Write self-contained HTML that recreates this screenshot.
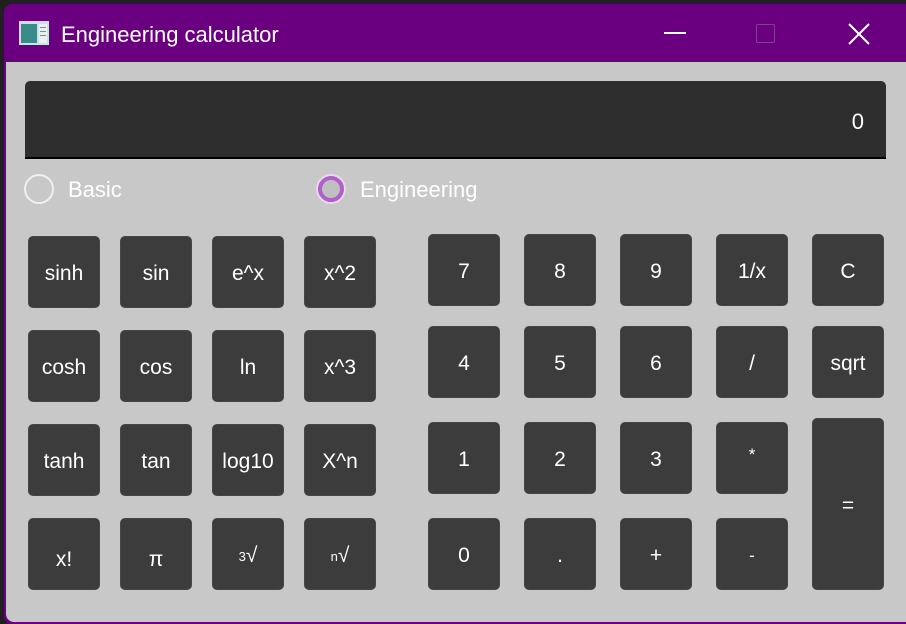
<!DOCTYPE html>
<html><head><meta charset="utf-8"><style>
*{margin:0;padding:0;box-sizing:border-box}
body{width:906px;height:611px;background:#202020;overflow:hidden;position:relative;font-family:"Segoe UI","Liberation Sans",sans-serif;color:#fff}
.win{position:absolute;left:4px;top:4px;width:910px;height:620px;background:#6a0080;border-radius:8px;overflow:hidden}
.title{position:absolute;left:0;top:0;right:0;height:58px}
.body{position:absolute;left:2px;top:58px;width:910px;height:560px;background:#c8c8c8;border-radius:0 0 0 8px}
.t{position:absolute;left:57px;top:18px;font-size:22px}
.b{position:absolute;width:72px;height:72px;background:#3c3c3c;border:1px solid #454545;border-radius:5px;display:flex;align-items:center;justify-content:center;font-size:21px;padding-top:4px}
.disp{position:absolute;left:25px;top:81px;width:861px;height:78px;background:#2e2e2e;border-radius:5px 5px 0 0;border-bottom:2px solid #000}
.disp span{position:absolute;right:22px;top:28px;font-size:22px}
.r{position:absolute;width:30px;height:30px;border-radius:50%}
.lab{position:absolute;top:177px;font-size:22px}
</style></head><body>
<div class="win">
<div class="title">
<svg style="position:absolute;left:15px;top:17px" width="30" height="24"><rect x="0" y="0" width="30" height="24" fill="#cfe0e8"/><rect x="2" y="3" width="16" height="19" fill="#3a8a8a"/><rect x="20" y="3" width="8" height="19" fill="#e8f0f0"/><rect x="21" y="6" width="6" height="1" fill="#888"/><rect x="21" y="10" width="6" height="1" fill="#888"/><rect x="21" y="14" width="6" height="1" fill="#888"/></svg>
<div class="t">Engineering calculator</div>
<div style="position:absolute;left:660px;top:28px;width:22px;height:2px;background:#fff"></div>
<div style="position:absolute;left:752px;top:20px;width:19px;height:19px;border:1px solid #8a3a9a;border-radius:2px"></div>
<svg style="position:absolute;left:844px;top:19px" width="22" height="22"><path d="M1 1L21 21M21 1L1 21" stroke="#fff" stroke-width="2"/></svg>
</div>
<div class="body"></div>
</div>
<div class="disp"><span>0</span></div>
<div class="r" style="left:24px;top:174px;border:2px solid #f0f0f0"></div>
<div class="lab" style="left:68px">Basic</div>
<div class="r" style="left:316px;top:174px;background:#b060c8;border:2px solid #e8d8ee"><div style="position:absolute;left:4px;top:4px;width:18px;height:18px;border-radius:50%;background:#c0c0c0"></div></div>
<div class="lab" style="left:360px">Engineering</div>

<div class="b" style="left:28px;top:236px">sinh</div>
<div class="b" style="left:120px;top:236px">sin</div>
<div class="b" style="left:212px;top:236px">e^x</div>
<div class="b" style="left:304px;top:236px">x^2</div>
<div class="b" style="left:28px;top:330px">cosh</div>
<div class="b" style="left:120px;top:330px">cos</div>
<div class="b" style="left:212px;top:330px">ln</div>
<div class="b" style="left:304px;top:330px">x^3</div>
<div class="b" style="left:28px;top:424px">tanh</div>
<div class="b" style="left:120px;top:424px">tan</div>
<div class="b" style="left:212px;top:424px">log10</div>
<div class="b" style="left:304px;top:424px">X^n</div>
<div class="b" style="left:28px;top:518px;padding-top:12px">x!</div>
<div class="b" style="left:120px;top:518px;padding-top:12px">π</div>
<div class="b" style="left:212px;top:518px;padding-top:4px"><sup style="font-size:13px">3</sup>√</div>
<div class="b" style="left:304px;top:518px;padding-top:4px"><sup style="font-size:13px">n</sup>√</div>

<div class="b" style="left:428px;top:234px">7</div>
<div class="b" style="left:524px;top:234px">8</div>
<div class="b" style="left:620px;top:234px">9</div>
<div class="b" style="left:716px;top:234px">1/x</div>
<div class="b" style="left:812px;top:234px">C</div>
<div class="b" style="left:428px;top:326px">4</div>
<div class="b" style="left:524px;top:326px">5</div>
<div class="b" style="left:620px;top:326px">6</div>
<div class="b" style="left:716px;top:326px">/</div>
<div class="b" style="left:812px;top:326px">sqrt</div>
<div class="b" style="left:428px;top:422px">1</div>
<div class="b" style="left:524px;top:422px">2</div>
<div class="b" style="left:620px;top:422px">3</div>
<div class="b" style="left:716px;top:422px;font-size:17px;padding-top:0;padding-bottom:6px">*</div>
<div class="b" style="left:812px;top:418px;height:172px">=</div>
<div class="b" style="left:428px;top:518px">0</div>
<div class="b" style="left:524px;top:518px">.</div>
<div class="b" style="left:620px;top:518px">+</div>
<div class="b" style="left:716px;top:518px;font-size:17px">-</div>
</body></html>
